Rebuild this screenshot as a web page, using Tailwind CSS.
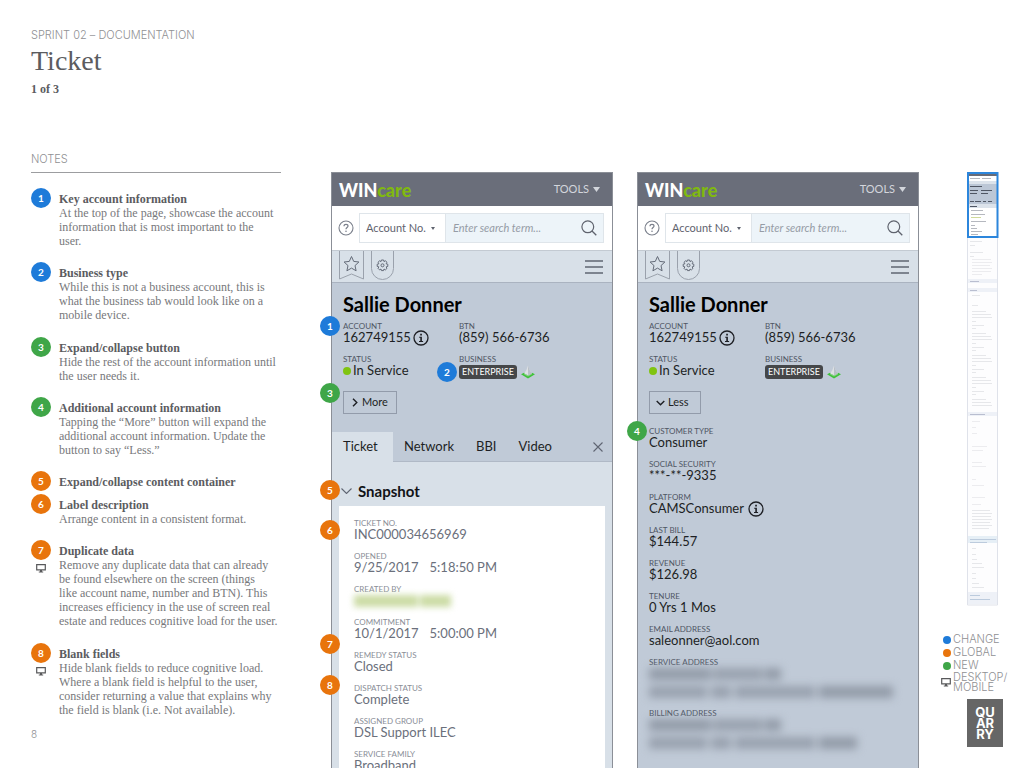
<!DOCTYPE html>
<html lang="en">
<head>
  <meta charset="UTF-8">
  <meta name="viewport" content="width=device-width, initial-scale=1.0">
  <title>Ticket - Sprint 02 Documentation</title>
  <script src="https://cdn.jsdelivr.net/npm/@tailwindcss/browser@4"></script>
</head>
<body class="bg-white">
  <!-- Shared icons -->
  <svg class="hidden" aria-hidden="true">
    <symbol id="icon-monitor" viewBox="0 0 10 9">
      <path d="M.7.7h8.6v5.1H.7z" fill="none" stroke="currentColor" stroke-width="1.2"/>
      <path d="M4 6h2v1.4h1.2v1.1H2.8V7.400H4z" fill="currentColor"/>
    </symbol>
    <symbol id="icon-info" viewBox="0 0 16 16">
      <circle cx="8" cy="8" r="7" fill="none" stroke="currentColor" stroke-width="1.300"/>
      <path d="M7.200 3.800h1.700v1.700H7.200zM6.200 6.700h2.700v4.200h1.200v1H6v-1h1.300V7.700H6.200z" fill="currentColor"/>
    </symbol>
    <symbol id="icon-help" viewBox="0 0 16 16">
      <circle cx="8" cy="8" r="7" fill="none" stroke="currentColor" stroke-width="1.100"/>
      <path d="M6 6.300C6 5 6.900 4.300 8 4.300s2 .7 2 1.800c0 1.400-2 1.500-2 3.100" fill="none" stroke="currentColor" stroke-width="1.200"/>
      <circle cx="8" cy="11.300" r=".8" fill="currentColor"/>
    </symbol>
    <symbol id="icon-search" viewBox="0 0 16 16">
      <circle cx="6.800" cy="6.800" r="5.900" fill="none" stroke="currentColor" stroke-width="1.200"/>
      <path d="M11 11l4.300 4.300" stroke="currentColor" stroke-width="1.300" fill="none"/>
    </symbol>
    <symbol id="icon-bookmark" viewBox="0 0 25 29">
      <path d="M.5 0v28l12-5 12 5V0" fill="none" stroke="#9aa1ac"/>
      <path d="M12.500 5.500l2.200 4.900 5.200.6-3.900 3.600 1.100 5.200-4.600-2.700-4.600 2.700L9 14.600 5.100 11l5.200-.6z" fill="none" stroke="#646b78"/>
    </symbol>
    <symbol id="icon-gear" viewBox="0 0 23 29">
      <path d="M.5 0v17.500a11 11 0 0 0 22 0V0" fill="none" stroke="#9aa1ac"/>
      <path d="M10.400 9h2.200l.4 1.600 1.400-.8 1.600 1.500-.9 1.500 1.700.4v2.200l-1.700.5.9 1.400-1.600 1.600-1.400-.9-.4 1.600h-2.200l-.4-1.600-1.400.9L7 17.300l.9-1.400-1.700-.5v-2.200l1.700-.4L7 11.300l1.600-1.500 1.400.8z" fill="none" stroke="#646b78" stroke-linejoin="round"/>
      <circle cx="11.500" cy="14.300" r="1.500" fill="none" stroke="#646b78"/>
    </symbol>
    <symbol id="icon-menu" viewBox="0 0 18 14">
      <path d="M0 1h18M0 7h18M0 13h18" stroke="currentColor" stroke-width="1.300"/>
    </symbol>
    <symbol id="icon-fiber" viewBox="0 0 14 14">
      <path d="M0 9.200l3-1.500 4 1.700 4-1.700 3 1.500-7 4.300z" fill="#3fc23a"/>
      <path d="M3.200 8.400L7 10.200l3.800-1.800v1.200L7 11.500 3.200 9.600z" fill="#8fce8c"/>
      <path d="M7 .5l1.500 4.300 2.300 3.600L7 10.200 3.200 8.400l2.300-3.600z" fill="#dde1e4"/>
      <path d="M7 .5l1.500 4.300 2.300 3.600L7 10.200z" fill="#b9c0c7"/>
    </symbol>
  </svg>

  <main class="flex h-screen overflow-hidden pl-[31px] pr-[13px]">
    <!-- Notes -->
    <section class="w-[250px] shrink-0 pt-7 font-['Liberation_Serif',serif] text-[12px] leading-[14px] text-[#77787b]">
      <header>
        <p class="whitespace-nowrap font-['Inter',sans-serif] text-[11px] font-light text-[#8f9093]">SPRINT 02 – DOCUMENTATION</p>
        <h1 class="mt-1 text-[28px] leading-[30px] text-[#5b5c5f]">Ticket</h1>
        <p class="mt-1.5 font-bold text-[#5b5c5f]">1 of 3</p>
      </header>
      <h2 class="mt-14 border-b border-[#9c9da0] pb-1.5 font-['Inter',sans-serif] text-[11px] font-light text-[#8f9093]">NOTES</h2>
      <ol class="mt-[15px]">
        <li class="mb-3.5 flex gap-2">
          <span class="flex size-5 shrink-0 items-center justify-center rounded-full bg-[#1e7bd9] font-['Lato',sans-serif] text-[10px] font-bold text-white">1</span>
          <div class="whitespace-nowrap pt-1">
            <h3 class="font-bold text-[#5b5c5f]">Key account information</h3>
            <p>At the top of the page, showcase the account<br>information that is most important to the<br>user.</p>
          </div>
        </li>
        <li class="mb-[15px] flex gap-2">
          <span class="flex size-5 shrink-0 items-center justify-center rounded-full bg-[#1e7bd9] font-['Lato',sans-serif] text-[10px] font-bold text-white">2</span>
          <div class="whitespace-nowrap pt-1">
            <h3 class="font-bold text-[#5b5c5f]">Business type</h3>
            <p>While this is not a business account, this is<br>what the business tab would look like on a<br>mobile device.</p>
          </div>
        </li>
        <li class="mb-3.5 flex gap-2">
          <span class="flex size-5 shrink-0 items-center justify-center rounded-full bg-[#3fa648] font-['Lato',sans-serif] text-[10px] font-bold text-white">3</span>
          <div class="whitespace-nowrap pt-1">
            <h3 class="font-bold text-[#5b5c5f]">Expand/collapse button</h3>
            <p>Hide the rest of the account information until<br>the user needs it.</p>
          </div>
        </li>
        <li class="mb-3.5 flex gap-2">
          <span class="flex size-5 shrink-0 items-center justify-center rounded-full bg-[#3fa648] font-['Lato',sans-serif] text-[10px] font-bold text-white">4</span>
          <div class="whitespace-nowrap pt-1">
            <h3 class="font-bold text-[#5b5c5f]">Additional account information</h3>
            <p>Tapping the “More” button will expand the<br>additional account information. Update the<br>button to say “Less.”</p>
          </div>
        </li>
        <li class="mb-[3px] flex gap-2">
          <span class="flex size-5 shrink-0 items-center justify-center rounded-full bg-[#e8740c] font-['Lato',sans-serif] text-[10px] font-bold text-white">5</span>
          <div class="whitespace-nowrap pt-1">
            <h3 class="font-bold text-[#5b5c5f]">Expand/collapse content container</h3>
          </div>
        </li>
        <li class="mb-3.5 flex gap-2">
          <span class="flex size-5 shrink-0 items-center justify-center rounded-full bg-[#e8740c] font-['Lato',sans-serif] text-[10px] font-bold text-white">6</span>
          <div class="whitespace-nowrap pt-1">
            <h3 class="font-bold text-[#5b5c5f]">Label description</h3>
            <p>Arrange content in a consistent format.</p>
          </div>
        </li>
        <li class="mb-[15px] flex gap-2">
          <div class="flex shrink-0 flex-col items-center gap-1">
            <span class="flex size-5 items-center justify-center rounded-full bg-[#e8740c] font-['Lato',sans-serif] text-[10px] font-bold text-white">7</span>
            <svg class="h-[9px] w-2.5 text-[#58595b]"><use href="#icon-monitor"/></svg>
          </div>
          <div class="whitespace-nowrap pt-1">
            <h3 class="font-bold text-[#5b5c5f]">Duplicate data</h3>
            <p>Remove any duplicate data that can already<br>be found elsewhere on the screen (things<br>like account name, number and BTN). This<br>increases efficiency in the use of screen real<br>estate and reduces cognitive load for the user.</p>
          </div>
        </li>
        <li class="mb-2.5 flex gap-2">
          <div class="flex shrink-0 flex-col items-center gap-1">
            <span class="flex size-5 items-center justify-center rounded-full bg-[#e8740c] font-['Lato',sans-serif] text-[10px] font-bold text-white">8</span>
            <svg class="h-[9px] w-2.5 text-[#58595b]"><use href="#icon-monitor"/></svg>
          </div>
          <div class="whitespace-nowrap pt-1">
            <h3 class="font-bold text-[#5b5c5f]">Blank fields</h3>
            <p>Hide blank fields to reduce cognitive load.<br>Where a blank field is helpful to the user,<br>consider returning a value that explains why<br>the field is blank (i.e. Not available).</p>
          </div>
        </li>
      </ol>
      <p class="font-['Inter',sans-serif] text-[10px] font-light text-[#8f9093]">8</p>
    </section>

    <!-- Screens -->
    <div class="ml-[50px] flex min-w-0 flex-1 gap-6 pt-[172px] font-['Lato',sans-serif]">
      <!-- Collapsed -->
      <article class="relative flex min-w-0 flex-1 flex-col border border-b-0 border-[#8b8f97] bg-[#d8e0e8]">
        <header class="flex h-[33px] shrink-0 items-center justify-between bg-[#6a6e7a] pl-[7px] pr-3">
          <p class="text-[18px] font-black leading-5 text-white">WIN<span class="text-[#80b90f]">care</span></p>
          <button class="flex items-center gap-1 text-[11px] text-[#d3d6dc]">TOOLS <svg class="h-[5px] w-[7px]" viewBox="0 0 7 5"><path d="M0 0h7L3.500 5z" fill="currentColor"/></svg></button>
        </header>
        <form class="flex h-11 shrink-0 items-center bg-white pl-1.5 pr-2">
          <button type="button" aria-label="Help" class="text-[#7b808c]"><svg class="size-4"><use href="#icon-help"/></svg></button>
          <div class="relative ml-[5px] shrink-0">
            <select aria-label="Search by" class="h-[30px] w-[86px] appearance-none border border-r-0 border-[#dfe5ea] bg-white pl-1.5 text-[11px] text-[#5f636e]">
              <option>Account No.</option>
            </select>
            <svg class="pointer-events-none absolute right-2.5 top-3.5 h-[3px] w-1" viewBox="0 0 4 3"><path d="M0 0h4L2 3z" fill="#5f636e"/></svg>
          </div>
          <div class="flex h-[30px] min-w-0 flex-1 items-center border border-[#dfe5ea] bg-[#edf4f9] pl-[7px] pr-1.5">
            <input type="text" aria-label="Search term" placeholder="Enter search term..." class="min-w-0 flex-1 text-[11px] italic placeholder:text-[#969ca6]">
            <button type="button" aria-label="Search" class="text-[#5f636e]"><svg class="size-4"><use href="#icon-search"/></svg></button>
          </div>
        </form>
        <nav class="flex h-[33px] shrink-0 items-start justify-between border-b border-t border-b-[#aab3c0] border-t-[#c3cad2] pl-[7px] pr-[9px]">
          <div class="flex gap-[7px]">
            <button aria-label="Favorite"><svg class="h-[29px] w-[25px]"><use href="#icon-bookmark"/></svg></button>
            <button aria-label="Settings"><svg class="h-[29px] w-[23px]"><use href="#icon-gear"/></svg></button>
          </div>
          <button aria-label="Menu" class="mt-[9px] text-[#5f6572]"><svg class="h-3.5 w-[18px]"><use href="#icon-menu"/></svg></button>
        </nav>
        <section class="h-[149px] shrink-0 bg-[#c0cad7] px-[11px] pt-[9px] text-[#1d1f24]">
          <h2 class="text-[20px] font-bold leading-6 text-black">Sallie Donner</h2>
          <dl class="mt-1.5 grid grid-cols-[116px_1fr] gap-y-[11px] text-[13px] leading-[13px]">
            <div>
              <dt class="text-[8px] leading-[9px] text-[#4f5664]">ACCOUNT</dt>
              <dd class="flex h-[13px] items-center gap-0.5">162749155<svg class="size-4"><use href="#icon-info"/></svg></dd>
            </div>
            <div>
              <dt class="text-[8px] leading-[9px] text-[#4f5664]">BTN</dt>
              <dd>(859) 566-6736</dd>
            </div>
            <div>
              <dt class="text-[8px] leading-[9px] text-[#4f5664]">STATUS</dt>
              <dd class="flex items-center gap-0.5"><span class="size-2 rounded-full bg-[#80c411]"></span>In Service</dd>
            </div>
            <div>
              <dt class="text-[8px] leading-[9px] text-[#4f5664]">BUSINESS</dt>
              <dd class="flex h-[15px] items-center gap-1"><span class="rounded-[3px] bg-[#454749] px-[3px] text-[9px] leading-[14px] text-white">ENTERPRISE</span><svg class="size-3.5"><use href="#icon-fiber"/></svg></dd>
            </div>
          </dl>
          <button class="mt-3 flex h-[23px] items-center gap-1 border border-[#929baa] px-2 text-[11px]"><svg class="h-[9px] w-1.5" viewBox="0 0 6 9"><path d="M1 .7l3.800 3.800L1 8.300" fill="none" stroke="currentColor" stroke-width="1.400"/></svg>More</button>
        </section>
        <nav class="flex h-[30px] shrink-0 items-stretch bg-[#c0cad7] text-[13px] text-[#1d1f24]">
          <a href="#" class="flex w-[61px] items-center bg-[#d8e0e8] pl-[11px]">Ticket</a>
          <div class="flex flex-1 items-center border-b border-[#b0b9c6] pl-[11px] pr-[9px]">
            <a href="#">Network</a>
            <a href="#" class="ml-[22px]">BBI</a>
            <a href="#" class="ml-[22px]">Video</a>
            <button aria-label="Close" class="ml-auto text-[#5f6572]"><svg class="size-2.5" viewBox="0 0 10 10"><path d="M.5.5l9 9M9.500.5l-9 9" stroke="currentColor" stroke-width="1.100"/></svg></button>
          </div>
        </nav>
        <section class="flex min-h-0 flex-1 flex-col px-[7px] pt-[17px]">
          <h3><button class="flex items-center gap-1.5 pl-0.5 text-[15px] font-bold leading-6 text-[#111317]"><svg class="h-1.5 w-[11px] text-[#5f6572]" viewBox="0 0 11 6"><path d="M.5.5l5 5 5-5" fill="none" stroke="currentColor" stroke-width="1.100"/></svg>Snapshot</button></h3>
          <dl class="mt-[3px] flex min-h-0 flex-1 flex-col gap-[11px] overflow-hidden bg-white px-[15px] pt-[13px] text-[13px] leading-[13px] text-[#6b707c]">
            <div><dt class="text-[8px] leading-[9px] text-[#8a8e97]">TICKET NO.</dt><dd>INC000034656969</dd></div>
            <div><dt class="text-[8px] leading-[9px] text-[#8a8e97]">OPENED</dt><dd class="flex gap-[11px]"><span>9/25/2017</span><span>5:18:50 PM</span></dd></div>
            <div><dt class="text-[8px] leading-[9px] text-[#8a8e97]">CREATED BY</dt><dd class="flex h-[13px] items-center gap-0.5 blur-[3px]"><span class="h-3 w-[64px] bg-[#ccdca6]"></span><span class="h-3 w-[31px] bg-[#ccdca6]"></span></dd></div>
            <div><dt class="text-[8px] leading-[9px] text-[#8a8e97]">COMMITMENT</dt><dd class="flex gap-[11px]"><span>10/1/2017</span><span>5:00:00 PM</span></dd></div>
            <div><dt class="text-[8px] leading-[9px] text-[#8a8e97]">REMEDY STATUS</dt><dd>Closed</dd></div>
            <div><dt class="text-[8px] leading-[9px] text-[#8a8e97]">DISPATCH STATUS</dt><dd>Complete</dd></div>
            <div><dt class="text-[8px] leading-[9px] text-[#8a8e97]">ASSIGNED GROUP</dt><dd>DSL Support ILEC</dd></div>
            <div><dt class="text-[8px] leading-[9px] text-[#8a8e97]">SERVICE FAMILY</dt><dd>Broadband</dd></div>
          </dl>
        </section>
        <!-- Callouts -->
        <span class="absolute -left-3 top-[143px] flex size-5 items-center justify-center rounded-full bg-[#1e7bd9] text-[10px] font-bold text-white">1</span>
        <span class="absolute left-[105px] top-[189px] flex size-5 items-center justify-center rounded-full bg-[#1e7bd9] text-[10px] font-bold text-white">2</span>
        <span class="absolute -left-3 top-[210px] flex size-5 items-center justify-center rounded-full bg-[#3fa648] text-[10px] font-bold text-white">3</span>
        <span class="absolute -left-3 top-[307px] flex size-5 items-center justify-center rounded-full bg-[#e8740c] text-[10px] font-bold text-white">5</span>
        <span class="absolute -left-3 top-[347px] flex size-5 items-center justify-center rounded-full bg-[#e8740c] text-[10px] font-bold text-white">6</span>
        <span class="absolute -left-3 top-[461px] flex size-5 items-center justify-center rounded-full bg-[#e8740c] text-[10px] font-bold text-white">7</span>
        <span class="absolute -left-3 top-[502px] flex size-5 items-center justify-center rounded-full bg-[#e8740c] text-[10px] font-bold text-white">8</span>
      </article>

      <!-- Expanded -->
      <article class="relative flex min-w-0 flex-1 flex-col border border-b-0 border-[#8b8f97] bg-[#d8e0e8]">
        <header class="flex h-[33px] shrink-0 items-center justify-between bg-[#6a6e7a] pl-[7px] pr-3">
          <p class="text-[18px] font-black leading-5 text-white">WIN<span class="text-[#80b90f]">care</span></p>
          <button class="flex items-center gap-1 text-[11px] text-[#d3d6dc]">TOOLS <svg class="h-[5px] w-[7px]" viewBox="0 0 7 5"><path d="M0 0h7L3.500 5z" fill="currentColor"/></svg></button>
        </header>
        <form class="flex h-11 shrink-0 items-center bg-white pl-1.5 pr-2">
          <button type="button" aria-label="Help" class="text-[#7b808c]"><svg class="size-4"><use href="#icon-help"/></svg></button>
          <div class="relative ml-[5px] shrink-0">
            <select aria-label="Search by" class="h-[30px] w-[86px] appearance-none border border-r-0 border-[#dfe5ea] bg-white pl-1.5 text-[11px] text-[#5f636e]">
              <option>Account No.</option>
            </select>
            <svg class="pointer-events-none absolute right-2.5 top-3.5 h-[3px] w-1" viewBox="0 0 4 3"><path d="M0 0h4L2 3z" fill="#5f636e"/></svg>
          </div>
          <div class="flex h-[30px] min-w-0 flex-1 items-center border border-[#dfe5ea] bg-[#edf4f9] pl-[7px] pr-1.5">
            <input type="text" aria-label="Search term" placeholder="Enter search term..." class="min-w-0 flex-1 text-[11px] italic placeholder:text-[#969ca6]">
            <button type="button" aria-label="Search" class="text-[#5f636e]"><svg class="size-4"><use href="#icon-search"/></svg></button>
          </div>
        </form>
        <nav class="flex h-[33px] shrink-0 items-start justify-between border-b border-t border-b-[#aab3c0] border-t-[#c3cad2] pl-[7px] pr-[9px]">
          <div class="flex gap-[7px]">
            <button aria-label="Favorite"><svg class="h-[29px] w-[25px]"><use href="#icon-bookmark"/></svg></button>
            <button aria-label="Settings"><svg class="h-[29px] w-[23px]"><use href="#icon-gear"/></svg></button>
          </div>
          <button aria-label="Menu" class="mt-[9px] text-[#5f6572]"><svg class="h-3.5 w-[18px]"><use href="#icon-menu"/></svg></button>
        </nav>
        <section class="min-h-0 flex-1 bg-[#c0cad7] px-[11px] pt-[9px] text-[#1d1f24]">
          <h2 class="text-[20px] font-bold leading-6 text-black">Sallie Donner</h2>
          <dl class="mt-1.5 grid grid-cols-[116px_1fr] gap-y-[11px] text-[13px] leading-[13px]">
            <div>
              <dt class="text-[8px] leading-[9px] text-[#4f5664]">ACCOUNT</dt>
              <dd class="flex h-[13px] items-center gap-0.5">162749155<svg class="size-4"><use href="#icon-info"/></svg></dd>
            </div>
            <div>
              <dt class="text-[8px] leading-[9px] text-[#4f5664]">BTN</dt>
              <dd>(859) 566-6736</dd>
            </div>
            <div>
              <dt class="text-[8px] leading-[9px] text-[#4f5664]">STATUS</dt>
              <dd class="flex items-center gap-0.5"><span class="size-2 rounded-full bg-[#80c411]"></span>In Service</dd>
            </div>
            <div>
              <dt class="text-[8px] leading-[9px] text-[#4f5664]">BUSINESS</dt>
              <dd class="flex h-[15px] items-center gap-1"><span class="rounded-[3px] bg-[#454749] px-[3px] text-[9px] leading-[14px] text-white">ENTERPRISE</span><svg class="size-3.5"><use href="#icon-fiber"/></svg></dd>
            </div>
          </dl>
          <button class="mt-3 flex h-[23px] items-center gap-[3px] border border-[#929baa] pl-1.5 pr-[11px] text-[11px]"><svg class="h-1.5 w-[9px]" viewBox="0 0 9 6"><path d="M.7 1l3.800 3.800L8.300 1" fill="none" stroke="currentColor" stroke-width="1.400"/></svg>Less</button>
          <dl class="mt-[13px] flex flex-col gap-[11px] text-[13px] leading-[13px]">
            <div><dt class="text-[8px] leading-[9px] text-[#4f5664]">CUSTOMER TYPE</dt><dd>Consumer</dd></div>
            <div><dt class="text-[8px] leading-[9px] text-[#4f5664]">SOCIAL SECURITY</dt><dd>***-**-9335</dd></div>
            <div><dt class="text-[8px] leading-[9px] text-[#4f5664]">PLATFORM</dt><dd class="flex h-[13px] items-center gap-1">CAMSConsumer<svg class="size-4"><use href="#icon-info"/></svg></dd></div>
            <div><dt class="text-[8px] leading-[9px] text-[#4f5664]">LAST BILL</dt><dd>$144.57</dd></div>
            <div><dt class="text-[8px] leading-[9px] text-[#4f5664]">REVENUE</dt><dd>$126.98</dd></div>
            <div><dt class="text-[8px] leading-[9px] text-[#4f5664]">TENURE</dt><dd>0 Yrs 1 Mos</dd></div>
            <div><dt class="text-[8px] leading-[9px] text-[#4f5664]">EMAIL ADDRESS</dt><dd>saleonner@aol.com</dd></div>
            <div>
              <dt class="text-[8px] leading-[9px] text-[#4f5664]">SERVICE ADDRESS</dt>
              <dd class="flex h-[31px] flex-col justify-center gap-1.5 blur-[4px]">
                <span class="flex gap-0.5"><i class="h-3 w-[62px] bg-[#929ba8]"></i><i class="h-3 w-[50px] bg-[#98a1ae]"></i><i class="h-3 w-4 bg-[#929ba8]"></i></span>
                <span class="flex gap-1"><i class="h-3 w-[58px] bg-[#98a1ae]"></i><i class="h-3 w-5 bg-[#98a1ae]"></i><i class="h-3 w-20 bg-[#98a1ae]"></i><i class="h-3 w-[74px] bg-[#929ba8]"></i></span>
              </dd>
            </div>
            <div>
              <dt class="text-[8px] leading-[9px] text-[#4f5664]">BILLING ADDRESS</dt>
              <dd class="flex h-[31px] flex-col justify-center gap-1.5 blur-[4px]">
                <span class="flex gap-0.5"><i class="h-3 w-[62px] bg-[#929ba8]"></i><i class="h-3 w-[50px] bg-[#98a1ae]"></i><i class="h-3 w-4 bg-[#929ba8]"></i></span>
                <span class="flex gap-1"><i class="h-3 w-[58px] bg-[#98a1ae]"></i><i class="h-3 w-5 bg-[#98a1ae]"></i><i class="h-3 w-20 bg-[#98a1ae]"></i><i class="h-3 w-[38px] bg-[#929ba8]"></i></span>
              </dd>
            </div>
          </dl>
        </section>
        <span class="absolute -left-[11px] top-[248px] flex size-5 items-center justify-center rounded-full bg-[#3fa648] text-[10px] font-bold text-white">4</span>
      </article>
    </div>

    <!-- Page map, legend and logo -->
    <aside class="ml-[22px] w-[70px] shrink-0 pt-[172px] font-['Inter',sans-serif] text-[11px] font-light leading-[13px] text-[#8f9093]">
      <svg class="ml-[26px] h-[434px] w-8" viewBox="0 0 32 434" role="img" aria-label="Page map">
        <path d="M.5 60h30v373H.5z" fill="#fdfdfe" stroke="#dfe2ea"/>
        <path d="M1 107h29v4H1zM1 116h29v4H1zM1 240h29v4H1zM1 420h29v12H1z" fill="#eef1f7"/>
        <path d="M1 364h29v7H1z" fill="#e6eff6"/>
        <g fill="none" stroke="#e6e7ea">
          <path d="M3 69.500h12M3 73.500h5M3 80.500h13M3 84.500h4M5 123.500h8M5 133.500h6"/>
          <path d="M5 87.500h19M5 90.500h20M5 93.500h18M5 96.500h20M5 99.500h19M5 102.500h10" stroke="#ececef"/>
          <path d="M5 139.500h14M5 142.500h19M5 145.500h20M5 149.500h4M5 153.500h12M5 156.500h4M5 161.500h14M5 164.500h19M5 167.500h20M5 171.500h4M5 175.500h12M5 178.500h4M5 183.500h14M5 186.500h19M5 189.500h20M5 193.500h4M5 197.500h12M5 200.500h4M5 205.500h14M5 208.500h19M5 211.500h20M5 215.500h4M5 219.500h12M5 222.500h4M5 227.500h14M5 230.500h19M5 233.500h20"/>
          <path d="M5 249.500h8M5 255.500h4M5 261.500h5M5 274.500h15M5 278.500h11M5 290.500h10M5 294.500h14M5 307.500h4M5 313.500h12M5 325.500h13M5 332.500h9" stroke="#ececef"/>
          <path d="M5 338.500h18M5 341.500h20M5 344.500h19M5 347.500h20M5 350.500h18M5 353.500h20M5 356.500h17"/>
          <path d="M5 376.500h4M5 382.500h4M5 387.500h5M5 391.500h10M5 395.500h12M5 401.500h4M5 406.500h4M5 411.500h7M5 415.500h12"/>
          <path d="M3 367.500h26M3 370.500h17M3 423.500h10M3 427.500h20" stroke="#bccbdd"/>
          <path d="M3 109.500h9M3 118.500h7M3 242.500h15" stroke="#b9bed0"/>
        </g>
        <path d="M1 1h29v64H1z" fill="#fff"/>
        <path d="M1 1h29v3H1z" fill="#676b77"/>
        <path d="M1 9h29v3H1zM1 32h29v4H1z" fill="#dce3eb"/>
        <path d="M1 12h29v20H1z" fill="#bcc7d6"/>
        <g fill="none" stroke="#4f5663">
          <path d="M3 14.500h12M3 18.500h8M14 18.500h11M3 21.500h7M14 21.500h7M3 29.500h4M8 29.500h6M16 29.500h3M21 29.500h4M3 34.500h7"/>
          <path d="M4 38.500h12M4 42.500h14M4 49.500h15M4 53.500h4M4 56.500h6M4 59.500h11M4 62.500h7M3 6.500h10M15 6.500h9" stroke="#b5b8bf"/>
          <path d="M4 45.500h10" stroke="#cfd99a"/>
        </g>
        <path d="M1 1h29.500v64H1z" fill="none" stroke="#2c86dc" stroke-width="2"/>
      </svg>
      <ul class="mt-[27px]">
        <li class="flex items-center gap-0.5 pl-0.5"><span class="size-2 rounded-full bg-[#1e7bd9]"></span>CHANGE</li>
        <li class="flex items-center gap-0.5 pl-0.5"><span class="size-2 rounded-full bg-[#e8740c]"></span>GLOBAL</li>
        <li class="flex items-center gap-0.5 pl-0.5"><span class="size-2 rounded-full bg-[#3fa648]"></span>NEW</li>
        <li class="flex items-center gap-0.5 leading-[10px]"><svg class="h-[9px] w-2.5 shrink-0 text-[#58595b]"><use href="#icon-monitor"/></svg><span>DESKTOP/<br>MOBILE</span></li>
      </ul>
      <p class="ml-[26px] mt-[7px] flex h-12 w-9 items-center justify-center bg-[#666] text-center text-[13px] font-bold leading-[11px] text-white">QU<br>AR<br>RY</p>
    </aside>
  </main>
</body>
</html>
